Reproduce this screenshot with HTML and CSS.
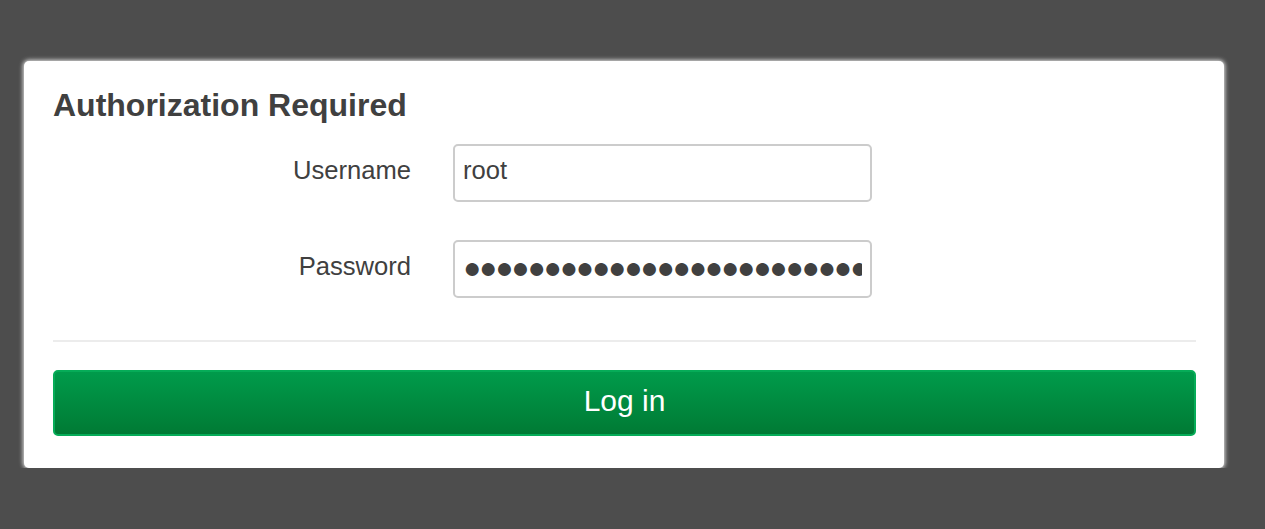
FILE: index.html
```html
<!DOCTYPE html>
<html>
<head>
<meta charset="utf-8">
<link rel="stylesheet" href="styles.css">
</head>
<body>
<div class="panel">
  <h2 class="title">Authorization Required</h2>
  <div class="fields">
    <label class="label" for="u">Username</label>
    <input class="input" id="u" type="text" value="root">
    <label class="label" for="p">Password</label>
    <input class="input input-pw" id="p" type="text" value="●●●●●●●●●●●●●●●●●●●●●●●●●●●●●●●●">
  </div>
  <hr class="sep">
  <button class="btn">Log in</button>
</div>
</body>
</html>
```

FILE: styles.css
```css
html, body {
  margin: 0;
  padding: 0;
  background: #4d4d4d;
  font-family: "Liberation Sans", Arial, sans-serif;
  color: #404040;
}
.panel {
  box-sizing: border-box;
  width: 1200px;
  margin: 61px 0 0 24px;
  background: #fff;
  border-radius: 5px;
  box-shadow: 0 0 4px 1px rgba(235,235,235,0.95);
  padding: 26px 28px 32px 29px;
}
.title {
  margin: 0;
  font-size: 32px;
  line-height: 36px;
  font-weight: bold;
  color: #404040;
}
.fields {
  display: grid;
  grid-template-columns: 358px 419px;
  column-gap: 42px;
  row-gap: 38px;
  align-items: center;
  margin-top: 21px;
}
.label {
  text-align: right;
  font-size: 25.6px;
  color: #404040;
  position: relative;
  top: -3px;
}
.input {
  box-sizing: border-box;
  height: 58px;
  width: 419px;
  border: 2px solid #cccccc;
  border-radius: 5px;
  padding: 0 8px 6px 8px;
  font-family: "Liberation Sans", Arial, sans-serif;
  font-size: 25.6px;
  color: #404040;
  outline: none;
  background: #fff;
}
.input-pw {
  font-size: 30px;
  letter-spacing: -2px;
  padding: 0 8px 2px 8px;
}
.sep {
  margin: 42px 0 28px 0;
  border: 0;
  border-top: 2px solid #ececec;
}
.btn {
  display: block;
  box-sizing: border-box;
  width: 100%;
  height: 66px;
  border: 2px solid #06ac58;
  border-radius: 5px;
  background: linear-gradient(to bottom, #009b4b, #007a34);
  color: #fff;
  font-family: "Liberation Sans", Arial, sans-serif;
  font-size: 30px;
  padding-bottom: 5px;
  cursor: pointer;
}
```
